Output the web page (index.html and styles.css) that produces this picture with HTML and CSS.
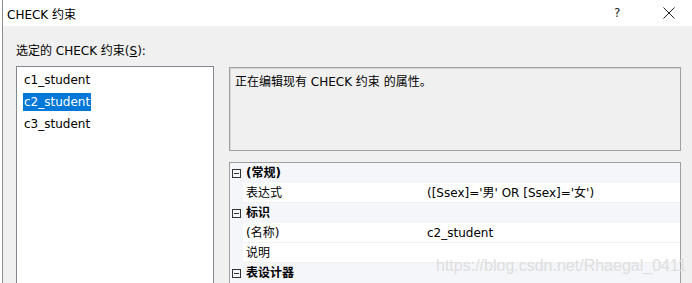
FILE: index.html
```html
<!DOCTYPE html>
<html lang="zh">
<head>
<meta charset="utf-8">
<link rel="stylesheet" href="styles.css">
</head>
<body>
<div class="window">
  <div class="titlebar">
    <span class="title">CHECK 约束</span>
    <span class="tb-help">?</span>
    <span class="tb-close">
      <svg width="12" height="12" viewBox="0 0 12 12"><path d="M0.5 0.5 L11.5 11.5 M11.5 0.5 L0.5 11.5" stroke="#222" stroke-width="1" fill="none"/></svg>
    </span>
  </div>
  <div class="content">
    <div class="label">选定的 CHECK 约束(<u>S</u>):</div>
    <div class="panes">
      <div class="listbox">
        <div class="item">c1_student</div>
        <div class="item selected">c2_student</div>
        <div class="item">c3_student</div>
      </div>
      <div class="right">
        <div class="desc">正在编辑现有 CHECK 约束 的属性。</div>
        <div class="grid">
          <div class="row cat">
            <span class="gutter"><svg width="9" height="9" viewBox="0 0 9 9"><rect x="0.5" y="0.5" width="8" height="8" fill="none" stroke="#333"/><path d="M2 4.5 H7" stroke="#333"/></svg></span>
            <span class="name">(常规)</span>
          </div>
          <div class="row prop">
            <span class="gutter"></span>
            <span class="name">表达式</span>
            <span class="value">([Ssex]='男' OR [Ssex]='女')</span>
          </div>
          <div class="row cat">
            <span class="gutter"><svg width="9" height="9" viewBox="0 0 9 9"><rect x="0.5" y="0.5" width="8" height="8" fill="none" stroke="#333"/><path d="M2 4.5 H7" stroke="#333"/></svg></span>
            <span class="name">标识</span>
          </div>
          <div class="row prop">
            <span class="gutter"></span>
            <span class="name">(名称)</span>
            <span class="value">c2_student</span>
          </div>
          <div class="row prop">
            <span class="gutter"></span>
            <span class="name">说明</span>
            <span class="value"></span>
          </div>
          <div class="row cat">
            <span class="gutter"><svg width="9" height="9" viewBox="0 0 9 9"><rect x="0.5" y="0.5" width="8" height="8" fill="none" stroke="#333"/><path d="M2 4.5 H7" stroke="#333"/></svg></span>
            <span class="name">表设计器</span>
          </div>
          <div class="watermark">https://blog.csdn.net/Rhaegal_0411</div>
        </div>
      </div>
    </div>
  </div>
</div>
</body>
</html>
```
FILE: styles.css
```css
html, body {
  margin: 0;
  padding: 0;
  height: 100%;
  overflow: hidden;
  background: #ffffff;
}
body {
  font-family: "DejaVu Sans", "Noto Sans CJK SC", sans-serif;
  font-size: 12px;
  color: #000;
}
.window {
  margin-left: 2px;
  border-left: 1px solid #8c8c8c;
  height: 100%;
  background: #f0f0f0;
  display: flex;
  flex-direction: column;
}
.titlebar {
  height: 26px;
  background: #ffffff;
  display: flex;
  align-items: center;
  padding-left: 4px;
  flex-shrink: 0;
}
.title {
  flex: 1;
}
.tb-help {
  width: 10px;
  margin-right: 39px;
  color: #222;
}
.tb-close {
  width: 12px;
  height: 12px;
  margin-right: 17px;
  display: flex;
}
.content {
  padding: 17px 11px 0 13px;
  flex: 1;
  display: flex;
  flex-direction: column;
}
.label {
  height: 16px;
  line-height: 16px;
  margin-bottom: 7px;
}
.panes {
  flex: 1;
  display: flex;
  gap: 15px;
}
.listbox {
  width: 196px;
  border: 1px solid #828790;
  border-bottom: none;
  background: #fff;
  padding-top: 4px;
  display: flex;
  flex-direction: column;
  gap: 4px;
}
.item {
  margin-left: 6px;
  padding: 0 1px;
  height: 18px;
  line-height: 18px;
  width: max-content;
}
.item.selected {
  background: #0078d7;
  color: #fff;
}
.right {
  flex: 1;
  display: flex;
  flex-direction: column;
  padding-top: 1px;
}
.desc {
  height: 84px;
  border: 1px solid #a0a0a0;
  box-shadow: inset 1px 1px 0 #d8d8d8;
  padding: 6px 5px;
  box-sizing: border-box;
  line-height: 16px;
  margin-bottom: 11px;
  flex-shrink: 0;
}
.grid {
  position: relative;
  flex: 1;
  border: 1px solid #a0a0a0;
  border-bottom: none;
  background: #f4f6fa;
}
.row {
  display: flex;
  height: 20px;
  line-height: 20px;
}
.gutter {
  width: 13px;
  flex-shrink: 0;
  display: flex;
  align-items: center;
  justify-content: center;
  box-sizing: border-box;
}
.cat .name {
  font-weight: bold;
  padding-left: 3px;
}
.prop {
  background: #fff;
  box-shadow: inset 13px 0 0 #f4f6fa, inset 0 -1px 0 #f0f0f0;
}
.prop .name {
  width: 182px;
  padding-left: 3px;
  box-sizing: border-box;
  flex-shrink: 0;
}
.prop .value {
  flex: 1;
  padding-left: 2px;
}
.watermark {
  position: absolute;
  left: 206px;
  top: 94px;
  font-family: "Liberation Sans", sans-serif;
  font-size: 16px;
  color: #dedede;
  white-space: nowrap;
}
```
